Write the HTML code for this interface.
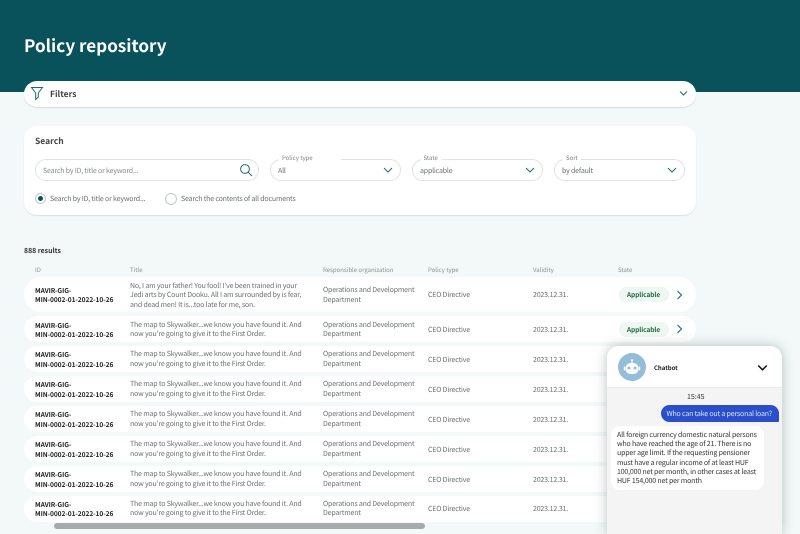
<!DOCTYPE html>
<html><head><meta charset="utf-8"><style>
html,body{margin:0;padding:0;width:800px;height:534px;overflow:hidden}
body{position:relative;background:#f3f9f9;font-family:"Noto Sans CJK SC","Liberation Sans",sans-serif;color:#555;text-rendering:geometricPrecision;filter:blur(.25px)}
div,span,svg{position:absolute;box-sizing:border-box}
.t{white-space:nowrap;font-size:7px;letter-spacing:-.17px;line-height:9.6px}
.row{left:24px;width:672px;background:#fff;border-radius:14px}
.id{color:#222;font-weight:700;font-size:6.6px;letter-spacing:-.05px}
.h{color:#8a9192;font-size:6px;letter-spacing:0;top:265px;white-space:nowrap;line-height:10px}
.sel{height:22px;top:159px;border:1px solid #dfe3e4;border-radius:11px;background:#fff}
.lab{font-size:6px;color:#7d8486;background:#fff;padding:0 3px;top:153px;line-height:10px;white-space:nowrap}
.gray{color:#6a6f70}
.pill{left:618.5px;width:50px;height:15px;border-radius:8px;background:#ecf8f1;color:#2a6a4a;font-weight:700;font-size:6.6px;letter-spacing:-.1px;text-align:center;line-height:15px}
</style></head><body>
<div style="left:0;top:0;width:800px;height:92px;background:#09525c"></div>
<div class="t" style="left:24px;top:33px;font-size:17.1px;letter-spacing:0;line-height:24px;font-weight:700;color:#fff">Policy repository</div>

<div style="left:24px;top:81px;width:672px;height:26px;background:#fff;border-radius:13px;box-shadow:0 1px 1px #d5dcdd"></div>
<svg style="left:30px;top:86px" width="14" height="15" viewBox="0 0 14 15" fill="none" stroke="#1d6a73" stroke-width="1"><path d="M1.5 1.5H12.5L8.3 7V11L5.7 13.5V7Z"/></svg>
<div class="t" style="left:50px;top:88px;font-size:8.5px;letter-spacing:0;line-height:12px;font-weight:700;color:#444">Filters</div>
<svg style="left:679px;top:90px" width="9" height="7" viewBox="0 0 9 7" fill="none" stroke="#1d6a73" stroke-width="1.1"><path d="M1 1.5L4.5 5L8 1.5"/></svg>

<div style="left:24px;top:126px;width:672px;height:89px;background:#fff;border-radius:13px;box-shadow:0 1px 1px #d9dfe0"></div>
<div class="t" style="left:35px;top:135px;font-size:8.5px;letter-spacing:0;line-height:13px;font-weight:700;color:#444">Search</div>
<div class="sel" style="left:35px;width:224px"></div>
<div class="t gray" style="left:43px;top:167px;color:#858b8c">Search by ID, title or keyword...</div>
<svg style="left:239px;top:163px" width="14" height="14" viewBox="0 0 14 14" fill="none" stroke="#1d6a73" stroke-width="1"><circle cx="6" cy="6" r="4.4"/><path d="M9.2 9.2L13 13"/></svg>

<div class="sel" style="left:270px;width:131px"></div>
<div class="lab" style="left:279px;width:62px">Policy type</div>
<div class="t gray" style="left:278px;top:167px">All</div>
<svg style="left:383px;top:167px" width="10" height="7" viewBox="0 0 10 7" fill="none" stroke="#1d6a73" stroke-width="1"><path d="M1 1L5 5L9 1"/></svg>

<div class="sel" style="left:412px;width:131px"></div>
<div class="lab" style="left:420.5px;width:21px">State</div>
<div class="t gray" style="left:420px;top:167px">applicable</div>
<svg style="left:525px;top:167px" width="10" height="7" viewBox="0 0 10 7" fill="none" stroke="#1d6a73" stroke-width="1"><path d="M1 1L5 5L9 1"/></svg>

<div class="sel" style="left:554px;width:131px"></div>
<div class="lab" style="left:563px;width:18px">Sort</div>
<div class="t gray" style="left:562px;top:167px">by default</div>
<svg style="left:667px;top:167px" width="10" height="7" viewBox="0 0 10 7" fill="none" stroke="#1d6a73" stroke-width="1"><path d="M1 1L5 5L9 1"/></svg>

<div style="left:35px;top:193px;width:11px;height:11px;border-radius:50%;border:1px solid #c3c9ca"></div>
<div style="left:38px;top:196px;width:5.4px;height:5.4px;border-radius:50%;background:#09525c"></div>
<div class="t gray" style="left:50px;top:195px">Search by ID, title or keyword...</div>
<div style="left:165px;top:193px;width:12px;height:12px;border-radius:50%;border:1px solid #c3c9ca"></div>
<div class="t gray" style="left:181px;top:195px">Search the contents of all documents</div>

<div class="t" style="left:24px;top:245.5px;font-weight:700;color:#333;font-size:6.9px;letter-spacing:0">888 results</div>

<div class="h" style="left:35px">ID</div>
<div class="h" style="left:130px">Title</div>
<div class="h" style="left:323px">Responsible organization</div>
<div class="h" style="left:428px">Policy type</div>
<div class="h" style="left:533px">Validity</div>
<div class="h" style="left:618px">State</div>

<div class="row" style="top:277px;height:35px;border-radius:17px"></div>
<div class="t id" style="left:35px;top:285.5px">MAVIR-GIG-<br>MIN-0002-01-2022-10-26</div>
<div class="t gray" style="left:130px;top:281.5px">No, I am your father! You fool! I've been trained in your<br>Jedi arts by Count Dooku. All I am surrounded by is fear,<br>and dead men! It is...too late for me, son.</div>
<div class="t gray" style="left:323px;top:286px">Operations and Development<br>Department</div>
<div class="t gray" style="left:428px;top:291px">CEO Directive</div>
<div class="t gray" style="left:533px;top:291px">2023.12.31.</div>
<div class="pill" style="top:287px">Applicable</div>
<svg style="left:676px;top:290px" width="7" height="10" viewBox="0 0 7 10" fill="none" stroke="#1d6a73" stroke-width="1.1"><path d="M1.5 1L5.5 5L1.5 9"/></svg>

<div class="row" style="top:316px;height:26px"></div>
<div class="t id" style="left:35px;top:320.5px">MAVIR-GIG-<br>MIN-0002-01-2022-10-26</div>
<div class="t gray" style="left:130px;top:320.5px">The map to Skywalker...we know you have found it. And<br>now you're going to give it to the First Order.</div>
<div class="t gray" style="left:323px;top:320.5px">Operations and Development<br>Department</div>
<div class="t gray" style="left:428px;top:325.5px">CEO Directive</div>
<div class="t gray" style="left:533px;top:325.5px">2023.12.31.</div>
<div class="pill" style="top:322px">Applicable</div>
<svg style="left:676px;top:324px" width="7" height="10" viewBox="0 0 7 10" fill="none" stroke="#1d6a73" stroke-width="1.1"><path d="M1.5 1L5.5 5L1.5 9"/></svg>

<div class="row" style="top:346px;height:26px"></div>
<div class="t id" style="left:35px;top:350px">MAVIR-GIG-<br>MIN-0002-01-2022-10-26</div>
<div class="t gray" style="left:130px;top:350px">The map to Skywalker...we know you have found it. And<br>now you're going to give it to the First Order.</div>
<div class="t gray" style="left:323px;top:350px">Operations and Development<br>Department</div>
<div class="t gray" style="left:428px;top:355.5px">CEO Directive</div>
<div class="t gray" style="left:533px;top:355.5px">2023.12.31.</div>

<div class="row" style="top:376px;height:26px"></div>
<div class="t id" style="left:35px;top:380px">MAVIR-GIG-<br>MIN-0002-01-2022-10-26</div>
<div class="t gray" style="left:130px;top:380px">The map to Skywalker...we know you have found it. And<br>now you're going to give it to the First Order.</div>
<div class="t gray" style="left:323px;top:380px">Operations and Development<br>Department</div>
<div class="t gray" style="left:428px;top:385.5px">CEO Directive</div>
<div class="t gray" style="left:533px;top:385.5px">2023.12.31.</div>

<div class="row" style="top:406px;height:26px"></div>
<div class="t id" style="left:35px;top:410px">MAVIR-GIG-<br>MIN-0002-01-2022-10-26</div>
<div class="t gray" style="left:130px;top:410px">The map to Skywalker...we know you have found it. And<br>now you're going to give it to the First Order.</div>
<div class="t gray" style="left:323px;top:410px">Operations and Development<br>Department</div>
<div class="t gray" style="left:428px;top:415.5px">CEO Directive</div>
<div class="t gray" style="left:533px;top:415.5px">2023.12.31.</div>

<div class="row" style="top:436px;height:26px"></div>
<div class="t id" style="left:35px;top:440px">MAVIR-GIG-<br>MIN-0002-01-2022-10-26</div>
<div class="t gray" style="left:130px;top:440px">The map to Skywalker...we know you have found it. And<br>now you're going to give it to the First Order.</div>
<div class="t gray" style="left:323px;top:440px">Operations and Development<br>Department</div>
<div class="t gray" style="left:428px;top:445.5px">CEO Directive</div>
<div class="t gray" style="left:533px;top:445.5px">2023.12.31.</div>

<div class="row" style="top:466px;height:26px"></div>
<div class="t id" style="left:35px;top:470px">MAVIR-GIG-<br>MIN-0002-01-2022-10-26</div>
<div class="t gray" style="left:130px;top:470px">The map to Skywalker...we know you have found it. And<br>now you're going to give it to the First Order.</div>
<div class="t gray" style="left:323px;top:470px">Operations and Development<br>Department</div>
<div class="t gray" style="left:428px;top:475.5px">CEO Directive</div>
<div class="t gray" style="left:533px;top:475.5px">2023.12.31.</div>

<div class="row" style="top:495.5px;height:26px"></div>
<div class="t id" style="left:35px;top:499.5px">MAVIR-GIG-<br>MIN-0002-01-2022-10-26</div>
<div class="t gray" style="left:130px;top:499.5px">The map to Skywalker...we know you have found it. And<br>now you're going to give it to the First Order.</div>
<div class="t gray" style="left:323px;top:499.5px">Operations and Development<br>Department</div>
<div class="t gray" style="left:428px;top:505px">CEO Directive</div>
<div class="t gray" style="left:533px;top:505px">2023.12.31.</div>

<div style="left:54px;top:523px;width:371px;height:6px;border-radius:3px;background:#a3abab"></div>

<div style="left:607px;top:346px;width:175px;height:188px;border-radius:12px 12px 0 0;background:#f4f4f4;box-shadow:0 0 12px rgba(60,80,80,.35);overflow:hidden">
  <div style="left:0;top:0;width:175px;height:42px;background:#fff;border-bottom:1px solid #ececec"></div>
</div>
<div style="left:618px;top:353px;width:28px;height:28px;border-radius:50%;background:#94bdd9"></div>
<svg style="left:618px;top:353px" width="28" height="28" viewBox="0 0 28 28"><circle cx="14" cy="7.5" r="1.2" fill="#fff"/><path d="M14 8V10" stroke="#fff" stroke-width="1"/><rect x="7.5" y="10" width="13" height="11" rx="5" fill="#fff"/><rect x="5.8" y="13.5" width="1.4" height="4" rx=".7" fill="#fff"/><rect x="20.8" y="13.5" width="1.4" height="4" rx=".7" fill="#fff"/><circle cx="11" cy="15" r="1.5" fill="#94bdd9"/><circle cx="17" cy="15" r="1.5" fill="#94bdd9"/></svg>
<div class="t" style="left:654px;top:363px;font-weight:700;color:#222;font-size:6px;letter-spacing:0">Chatbot</div>
<svg style="left:757px;top:364px" width="11" height="8" viewBox="0 0 11 8" fill="none" stroke="#111" stroke-width="1.5"><path d="M1.2 1.5L5.5 5.8L9.8 1.5"/></svg>
<div class="t" style="left:687px;top:393px;color:#333;font-size:7px;letter-spacing:0">15:45</div>
<div style="left:661px;top:405px;width:118px;height:17px;background:#2a4fc9;border-radius:9px 9px 1px 9px"></div>
<div class="t" style="left:666.5px;top:409.5px;color:#dfe6fa">Who can take out a personal loan?</div>
<div style="left:611px;top:426px;width:153px;height:64px;background:#fff;border-radius:9px"></div>
<div class="t" style="left:617px;top:430.5px;color:#333;line-height:9.35px">All foreign currency domestic natural persons<br>who have reached the age of 21. There is no<br>upper age limit. If the requesting pensioner<br>must have a regular income of at least HUF<br>100,000 net per month, in other cases at least<br>HUF 154,000 net per month</div>
</body></html>
